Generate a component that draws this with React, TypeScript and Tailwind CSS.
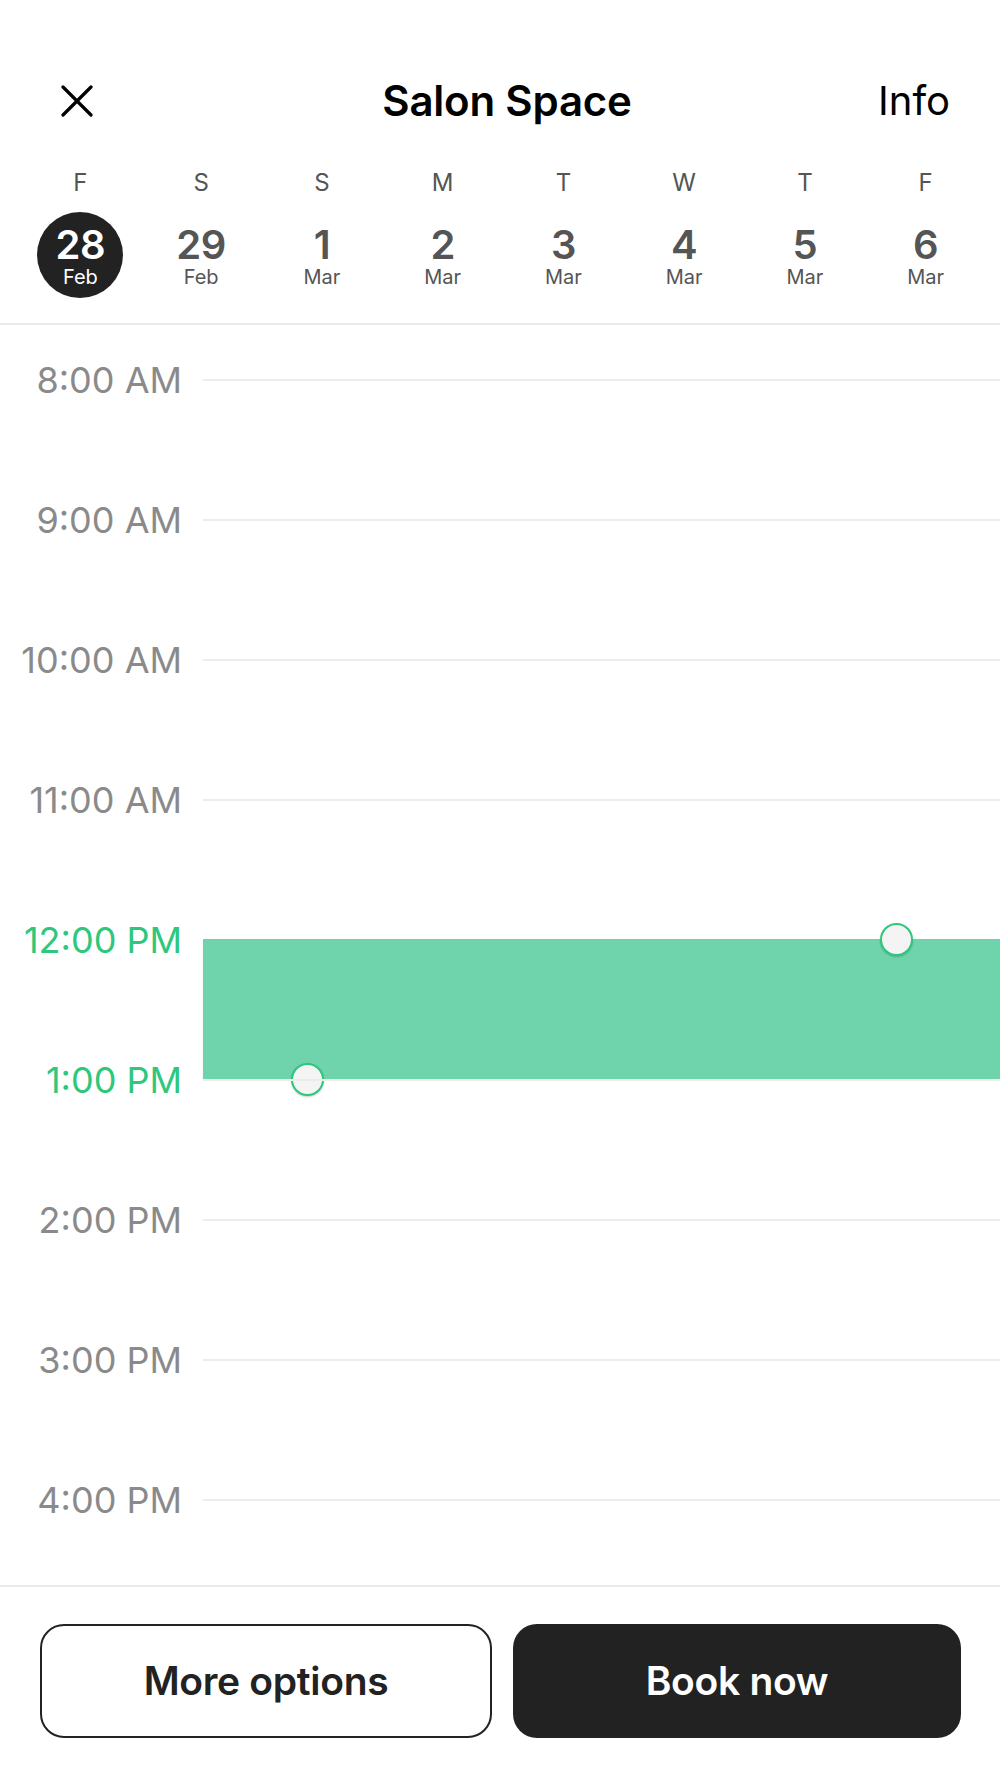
import React from "react";

const days = [
  { w: "F", d: "28", m: "Feb", sel: true },
  { w: "S", d: "29", m: "Feb" },
  { w: "S", d: "1", m: "Mar" },
  { w: "M", d: "2", m: "Mar" },
  { w: "T", d: "3", m: "Mar" },
  { w: "W", d: "4", m: "Mar" },
  { w: "T", d: "5", m: "Mar" },
  { w: "F", d: "6", m: "Mar" },
];

const hours = [
  "8:00 AM",
  "9:00 AM",
  "10:00 AM",
  "11:00 AM",
  "12:00 PM",
  "1:00 PM",
  "2:00 PM",
  "3:00 PM",
  "4:00 PM",
];

export default function App() {
  return (
    <div
      className="w-[1000px] h-[1778px] bg-white flex flex-col overflow-hidden"
      style={{ fontFamily: "Inter, 'Noto Sans', sans-serif" }}
    >
      {/* Header */}
      <div className="mt-[61px] h-[80px] grid grid-cols-[1fr_auto_1fr] items-center">
        <div className="pl-[61px] flex items-center">
          <svg width="32" height="32" viewBox="0 0 32 32" fill="none">
            <path d="M2 2 L30 30 M30 2 L2 30" stroke="#000" strokeWidth="3.2" strokeLinecap="round" />
          </svg>
        </div>
        <div className="pl-[14px] text-[42px] font-semibold text-black tracking-[-0.2px] leading-none">
          Salon Space
        </div>
        <div className="pr-[50px] flex justify-end text-[40px] text-black leading-none">Info</div>
      </div>

      {/* Days */}
      <div className="pl-[20px] pr-[14px] pt-[27px] pb-[25px] flex border-b-2 border-[#e9e9e9]">
        {days.map((d, i) => (
          <div key={i} className="flex-1 flex flex-col items-center">
            <div className="h-[30px] flex items-center text-[24px] text-[#555] leading-none">{d.w}</div>
            <div
              className={
                "mt-[14px] w-[86px] h-[86px] rounded-full flex flex-col items-center pt-[15px] " +
                (d.sel ? "bg-[#222] text-white" : "text-[#555]")
              }
            >
              <div className="text-[40px] font-semibold leading-[36px] tracking-[-0.5px]">{d.d}</div>
              <div className="mt-[4px] text-[20px] leading-[20px]">{d.m}</div>
            </div>
          </div>
        ))}
      </div>

      {/* Timeline */}
      <div className="flex-1 overflow-hidden pt-[35px]">
        {hours.map((h) => {
          const green = h === "12:00 PM" || h === "1:00 PM";
          return (
            <div key={h} className="h-[140px] relative">
              <div className="h-[40px] flex items-center">
                <div
                  className={
                    "w-[182px] text-right text-[36px] leading-none " +
                    (green ? "text-[#2ec77c]" : "text-[#8a8a8a]")
                  }
                >
                  {h}
                </div>
                <div className="ml-[21px] flex-1 h-[2px] bg-[#ececec]" />
              </div>
              {h === "12:00 PM" && (
                <div className="absolute top-[19px] left-[203px] right-0 h-[140px] bg-[#6fd4ac] shadow-[0_1px_1px_rgba(0,0,0,0.12)]">
                  <div className="absolute -top-[16px] left-[677px] w-[33px] h-[33px] rounded-full bg-[#f4f4f4] border-2 border-[#2ec77c] shadow-[0_1px_2px_rgba(0,0,0,0.2)]" />
                  <div className="absolute -bottom-[17px] left-[88px] w-[33px] h-[33px] rounded-full bg-[#f4f4f4] border-2 border-[#2ec77c] shadow-[0_1px_2px_rgba(0,0,0,0.2)]" />
                </div>
              )}
            </div>
          );
        })}
      </div>

      {/* Footer */}
      <div className="border-t-2 border-[#e9e9e9] pt-[37px] pb-[40px] pl-[40px] pr-[39px] flex gap-[21px]">
        <button className="flex-1 h-[114px] rounded-[24px] border-2 border-[#222] bg-white text-[#222] text-[39px] font-semibold tracking-[-0.3px]">
          More options
        </button>
        <button className="flex-1 h-[114px] rounded-[24px] bg-[#222] text-white text-[39px] font-semibold tracking-[-0.3px]">
          Book now
        </button>
      </div>
    </div>
  );
}
